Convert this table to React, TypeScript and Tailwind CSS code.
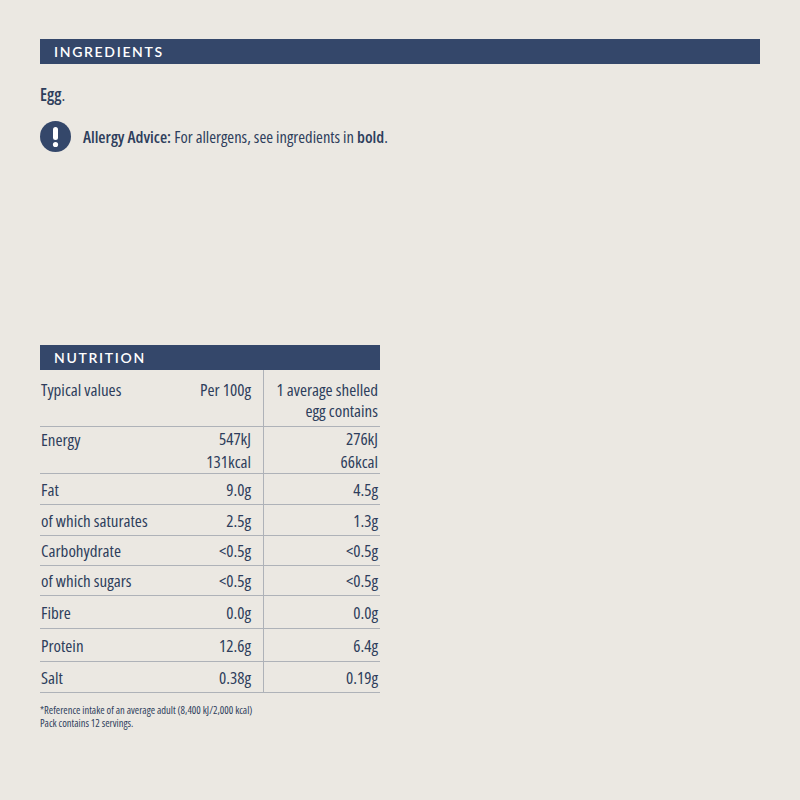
type Row = { label: string; per100: string[]; perEgg: string[]; h: string };

const rows: Row[] = [
  { label: "Energy", per100: ["547kJ", "131kcal"], perEgg: ["276kJ", "66kcal"], h: "h-[47px]" },
  { label: "Fat", per100: ["9.0g"], perEgg: ["4.5g"], h: "h-[31px]" },
  { label: "of which saturates", per100: ["2.5g"], perEgg: ["1.3g"], h: "h-[31px]" },
  { label: "Carbohydrate", per100: ["<0.5g"], perEgg: ["<0.5g"], h: "h-[30px]" },
  { label: "of which sugars", per100: ["<0.5g"], perEgg: ["<0.5g"], h: "h-[30px]" },
  { label: "Fibre", per100: ["0.0g"], perEgg: ["0.0g"], h: "h-[33px]" },
  { label: "Protein", per100: ["12.6g"], perEgg: ["6.4g"], h: "h-[33px]" },
  { label: "Salt", per100: ["0.38g"], perEgg: ["0.19g"], h: "h-[31px]" },
];

const AlertIcon = () => (
  <svg width="31" height="31" viewBox="0 0 31 31" className="shrink-0">
    <circle cx="15.5" cy="15.5" r="15.5" fill="#34476a" />
    <rect x="13" y="6" width="5" height="13" rx="2.5" fill="#fff" />
    <circle cx="15.5" cy="23.5" r="2.6" fill="#fff" />
  </svg>
);

const SectionBar = ({ title }: { title: string }) => (
  <div className="h-[25px] bg-[#34476a] flex items-center pl-[14px]">
    <span className="font-['Lato',sans-serif] [font-stretch:100%] text-white text-[14px] font-semibold tracking-[0.12em] leading-none">
      {title}
    </span>
  </div>
);

export default function App() {
  return (
    <div className="w-[800px] h-[800px] bg-[#ebe8e2] text-[#2e3e5c] font-['Open_Sans',sans-serif] [font-stretch:75%] px-10 pt-[39px]">
      <SectionBar title="INGREDIENTS" />
      <p className="mt-[19px] text-[17px] leading-6">
        <span className="font-semibold">Egg</span>.
      </p>
      <div className="mt-[14px] flex items-center gap-[12px] text-[16.5px] leading-6">
        <AlertIcon />
        <p>
          <span className="font-semibold">Allergy Advice:</span> For allergens, see ingredients in{" "}
          <span className="font-semibold">bold</span>.
        </p>
      </div>

      <div className="w-[340px] mt-[193px]">
        <SectionBar title="NUTRITION" />
        <div className="flex h-[57px] border-b border-[#aeb2b8] text-[17px] leading-[21px]">
          <div className="w-[223px] flex justify-between pl-px pr-[12px] pt-[9px]">
            <span>Typical values</span>
            <span>Per 100g</span>
          </div>
          <div className="flex-1 border-l border-[#aeb2b8] text-right pr-[2px] pt-[9px]">
            <div>1 average shelled</div>
            <div>egg contains</div>
          </div>
        </div>
        {rows.map((r) => (
          <div key={r.label} className={`flex ${r.h} border-b border-[#aeb2b8] text-[17px] leading-[23px]`}>
            <div className="w-[223px] flex justify-between pl-px pr-[12px]">
              <div className={r.per100.length > 1 ? "pt-px" : "self-center"}>{r.label}</div>
              <div className="self-center text-right">
                {r.per100.map((v) => (
                  <div key={v}>{v}</div>
                ))}
              </div>
            </div>
            <div className="flex-1 border-l border-[#aeb2b8] flex flex-col justify-center text-right pr-[2px]">
              {r.perEgg.map((v) => (
                <div key={v}>{v}</div>
              ))}
            </div>
          </div>
        ))}
        <div className="mt-[11px] text-[10.5px] leading-[13px]">
          <div>*Reference intake of an average adult (8,400 kJ/2,000 kcal)</div>
          <div>Pack contains 12 servings.</div>
        </div>
      </div>
    </div>
  );
}
